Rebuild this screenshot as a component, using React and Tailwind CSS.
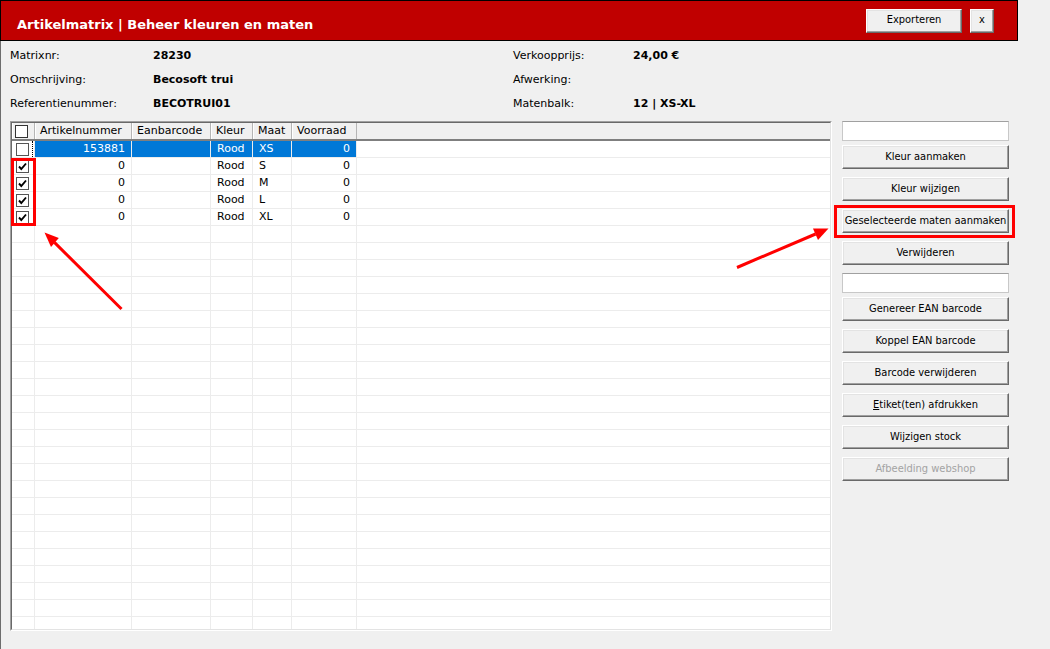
import React from "react";

const rows = [
  { num: "153881", kleur: "Rood", maat: "XS", vr: "0", checked: false, selected: true },
  { num: "0", kleur: "Rood", maat: "S", vr: "0", checked: true },
  { num: "0", kleur: "Rood", maat: "M", vr: "0", checked: true },
  { num: "0", kleur: "Rood", maat: "L", vr: "0", checked: true },
  { num: "0", kleur: "Rood", maat: "XL", vr: "0", checked: true },
];
while (rows.length < 29) rows.push(null);

function Check({ checked, dark }) {
  return (
    <div
      className={`w-[13px] h-[13px] bg-white border ${dark ? "border-[#333333]" : "border-[#555555]"} flex items-center justify-center`}
    >
      {checked && (
        <svg width="11" height="11" viewBox="0 0 11 11">
          <path d="M2 5.5 L4.3 8 L9 2.5" fill="none" stroke="#000" strokeWidth="1.9" />
        </svg>
      )}
    </div>
  );
}

function Btn({ children, disabled, className = "" }) {
  return (
    <div
      className={`h-[24px] flex items-center justify-center bg-[#f0f0f0] border border-t-white border-l-white border-r-[#696969] border-b-[#696969] shadow-[inset_-1px_-1px_0_#a0a0a0,inset_1px_1px_0_#e3e3e3] text-[11px] font-['DejaVu_Sans_Condensed','DejaVu_Sans',sans-serif] ${disabled ? "text-[#a3a3a3]" : "text-black"} ${className}`}
    >
      {children}
    </div>
  );
}

const cols = [
  { key: "cb", w: "w-[23px]" },
  { key: "num", w: "w-[97px]", label: "Artikelnummer", align: "right" },
  { key: "ean", w: "w-[79px]", label: "Eanbarcode" },
  { key: "kleur", w: "w-[42px]", label: "Kleur" },
  { key: "maat", w: "w-[39px]", label: "Maat" },
  { key: "vr", w: "w-[65px]", label: "Voorraad", align: "right" },
];

export default function App() {
  return (
    <div className="w-[1050px] h-[649px] bg-[#f0f0f0] relative overflow-hidden font-['DejaVu_Sans',sans-serif] text-[11px] text-black">
      {/* Header */}
      <div className="w-[1018px] h-[41px] bg-[#c00000] border border-black flex items-center pl-4 pr-[23px]">
        <div className="text-white font-bold text-[13px] leading-[13px] mt-[8px]">
          Artikelmatrix | Beheer kleuren en maten
        </div>
        <div className="flex-1" />
        <Btn className="w-[96px]">Exporteren</Btn>
        <Btn className="w-[24px] ml-[8px]">x</Btn>
      </div>

      {/* Body */}
      <div className="border-l border-[#6d6d6d] h-[608px]">
        {/* Info */}
        <div className="pt-[3px] pl-[9px] grid grid-cols-[143px_360px_120px_1fr] auto-rows-[24px] items-center">
          <div>Matrixnr:</div>
          <div className="font-bold">28230</div>
          <div>Verkoopprijs:</div>
          <div className="font-bold">24,00 €</div>
          <div>Omschrijving:</div>
          <div className="font-bold">Becosoft trui</div>
          <div>Afwerking:</div>
          <div className="font-bold"></div>
          <div>Referentienummer:</div>
          <div className="font-bold">BECOTRUI01</div>
          <div>Matenbalk:</div>
          <div className="font-bold">12 | XS-XL</div>
        </div>

        <div className="flex mt-[5px] pl-[9px]">
          {/* Table */}
          <div className="w-[822px] h-[510px] border border-t-[#a0a0a0] border-l-[#a0a0a0] border-r-white border-b-white">
            <div className="w-full h-full border border-t-[#696969] border-l-[#696969] border-r-[#e3e3e3] border-b-[#e3e3e3] bg-white overflow-hidden flex flex-col">
              {/* header row */}
              <div className="h-[18px] shrink-0 flex bg-[#f0f0f0] border-b-2 border-[#7f7f7f]">
                {cols.map((c) => (
                  <div
                    key={c.key}
                    className={`${c.w} shrink-0 h-full border-r border-[#b5b5b5] shadow-[inset_1px_0_0_#ffffff] flex items-center ${c.key === "cb" ? "pl-[3px]" : "pl-[5px]"}`}
                  >
                    {c.key === "cb" ? <Check dark /> : c.label}
                  </div>
                ))}
                <div className="flex-1" />
              </div>
              {/* body rows */}
              {rows.map((r, i) => (
                <div key={i} className="h-[17px] shrink-0 flex border-b border-[#ececec]">
                  {cols.map((c) => {
                    if (c.key === "cb") {
                      return (
                        <div key={c.key} className={`${c.w} shrink-0 h-full border-r border-[#ececec] flex items-center pl-[4px]`}>
                          {r && <Check checked={r.checked} />}
                          {r && r.selected && <div className="ml-auto mr-[1px] h-full border-r border-dotted border-black" />}
                        </div>
                      );
                    }
                    const sel = r && r.selected;
                    return (
                      <div
                        key={c.key}
                        className={`${c.w} shrink-0 h-full border-r border-[#ececec] flex items-center ${c.align === "right" ? "justify-end pr-[6px]" : "pl-[6px]"} ${sel ? "bg-[#0078d7] text-white" : ""}`}
                      >
                        {r ? r[c.key] : ""}
                      </div>
                    );
                  })}
                  <div className="flex-1" />
                </div>
              ))}
            </div>
          </div>

          {/* Right panel */}
          <div className="ml-[10px] w-[167px] flex flex-col">
            <div className="h-[20px] bg-white border border-[#c8c8c8] border-t-[#a0a0a0]" />
            <Btn className="mt-[4px]">Kleur aanmaken</Btn>
            <Btn className="mt-[8px]">Kleur wijzigen</Btn>
            <Btn className="mt-[8px]">Geselecteerde maten aanmaken</Btn>
            <Btn className="mt-[8px]">Verwijderen</Btn>
            <div className="mt-[8px] h-[20px] bg-white border border-[#c8c8c8] border-t-[#a0a0a0]" />
            <Btn className="mt-[4px]">Genereer EAN barcode</Btn>
            <Btn className="mt-[8px]">Koppel EAN barcode</Btn>
            <Btn className="mt-[8px]">Barcode verwijderen</Btn>
            <Btn className="mt-[8px]">
              <span>
                <span className="underline">E</span>tiket(ten) afdrukken
              </span>
            </Btn>
            <Btn className="mt-[8px]">Wijzigen stock</Btn>
            <Btn className="mt-[8px]" disabled>Afbeelding webshop</Btn>
          </div>
        </div>
      </div>

      {/* Annotations */}
      <div className="absolute left-[11px] top-[158px] w-[25px] h-[68px] border-[3px] border-[#ff0000]" />
      <div className="absolute left-[834px] top-[205px] w-[181px] h-[33px] border-[3px] border-[#ff0000]" />
      <svg className="absolute left-0 top-0 pointer-events-none" width="1050" height="649">
        <line x1="121.5" y1="309" x2="54.4" y2="242.4" stroke="#ff0000" strokeWidth="3" />
        <polygon points="44.5,232.5 58.8,238 51,247" fill="#ff0000" />
        <line x1="737" y1="267.5" x2="815.6" y2="234" stroke="#ff0000" strokeWidth="3" />
        <polygon points="828.5,228.5 818,240 813,228.5" fill="#ff0000" />
      </svg>
    </div>
  );
}
